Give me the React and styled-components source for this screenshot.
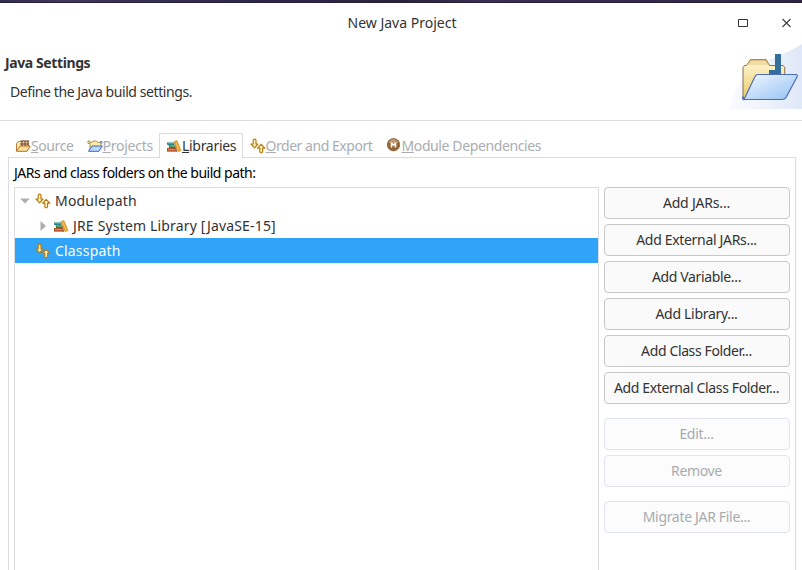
import React from 'react';
import styled, { createGlobalStyle } from 'styled-components';

const Global = createGlobalStyle`
  *{box-sizing:border-box}
  body{margin:0;background:#fff;overflow:hidden;font:14px/20px "Noto Sans",sans-serif;color:#333}
`;
const Window = styled.div`height:570px;width:802px;display:flex;flex-direction:column;overflow:hidden;background:#fff;`;
const Wallpaper = styled.div`height:3px;flex:none;border-bottom:1px solid #262039;background:linear-gradient(90deg,#352c51,#40365f 8%,#30284a 30%,#29233d 50%,#3a2e52 60%,#32284a 88%,#2d2442);`;
const TitleBar = styled.header`height:40px;flex:none;display:grid;grid-template-columns:1fr auto 1fr;align-items:center;padding:0 10px 0 12px;`;
const Controls = styled.div`grid-column:3;display:flex;justify-content:flex-end;gap:32px;`;
const Label = styled.span`white-space:nowrap;font-size:14px;letter-spacing:${p => p.$ls || 0}px;font-weight:${p => p.$bold ? 700 : 400};`;
const Banner = styled.section`height:78px;flex:none;display:flex;justify-content:space-between;border-bottom:1px solid #dcdcdc;`;
const BannerText = styled.div`display:flex;flex-direction:column;padding:10px 0 0 5px;gap:9px;`;
const Indent = styled.div`padding-left:5px;`;
const Tabs = styled.nav`display:flex;height:25px;flex:none;margin:12px 6px -1px 8px;z-index:1;`;
const Tab = styled.div`
  display:flex;align-items:flex-start;width:${p => p.$w}px;height:25px;padding:${p => p.$active ? 2 : 3}px 0 0 ${p => p.$active ? 6 : 7}px;
  color:${p => p.$active ? '#333' : '#aaadb2'};
  ${p => p.$active && 'background:#fff;border:1px solid #d9dbe0;border-bottom:0;'}
  svg{flex:none;margin-top:2px}
`;
const Mnemonic = styled.span`text-decoration:underline;text-underline-offset:1px;text-decoration-thickness:1px;text-decoration-skip-ink:none;`;
const Panel = styled.main`flex:1;min-height:0;margin:0 6px 0 8px;border:1px solid #d9dbe0;border-bottom:0;padding:5px 5px 0;display:flex;flex-direction:column;`;
const Caption = styled.div`height:24px;flex:none;color:#000;`;
const Body = styled.div`display:flex;gap:5px;flex:1;min-height:0;`;
const Tree = styled.div`width:585px;border:1px solid #dcdcdf;border-bottom:0;`;
const Row = styled.div`height:25px;display:flex;align-items:center;padding-left:${p => p.$pad}px;gap:4px;background:${p => p.$selected ? '#2fa4f8' : '#fff'};color:${p => p.$selected ? '#fff' : '#333'};svg{flex:none}`;
const ArrowIcon = styled.svg`margin-right:1px;`;
const Buttons = styled.div`display:flex;flex-direction:column;gap:5px;width:186px;`;
const Group = styled.div`display:flex;flex-direction:column;gap:5px;margin-bottom:9px;`;
const Button = styled.button`height:32px;width:186px;padding:0 1px 0 0;border:1px solid #c8c8c8;border-radius:4px;background:#fafafa;color:#333;font:14px/20px "Noto Sans",sans-serif;
  &:disabled{border-color:#e1e4ee;background:#fcfcfc;color:#a8abaf}`;

const PathIcon = ({ selected }) => (
  <svg width="16" height="16" viewBox="0 -1 16 16" fill={selected ? '#fff3b6' : '#fff3bf'} stroke="#b97b10" strokeWidth="1.2" strokeLinejoin="round">
    <path d="M3.2 1.5 Q3.2.2 4.6.2 Q6 .2 6 1.5V5H8L4.6 8.8 1 5H3.2Z" />
    <path d="M9.8 12.6V9.2H7.6L11.2 5.3 14.9 9.2H12.6V12.6Q12.6 13.8 11.2 13.8 9.8 13.8 9.8 12.6Z" />
  </svg>
);
const BooksIcon = () => (
  <svg width="16" height="16" viewBox="0 0 16 16">
    <path d="M1 4.5H8.5V7.5H2.5L1 6.5Z" fill="#24877f" /><path d="M2 5H8V6H2Z" fill="#3fa9ad" />
    <path d="M3 7.5H9.5V10H3Z" fill="#34784a" /><path d="M4 8H9.5V9H4Z" fill="#63a06a" />
    <path d="M1 10H10.5V13.7H1Z" fill="#b45530" /><path d="M2 11H10V12.2H2Z" fill="#dc8452" />
    <path d="M8.6 6L11 13.7H10Z" fill="#7a4a30" />
    <path d="M8 3.4L11 2.5 15 12.6 12 13.7Z" fill="#e9a129" stroke="#c67e18" strokeWidth=".5" />
    <path d="M9.8 3.8L13 12.5" stroke="#ffc760" />
  </svg>
);
const FolderIcon = ({ source }) => (
  <svg width="16" height="16" viewBox="0 0 16 16" strokeLinejoin="round">
    <path d={source ? 'M1.5 13V5.5L3.5 3.5H13.5V8' : 'M3 13V5.5H1V3H3V4.5H5L6 3H9.5L10.5 4.5H14V8'} fill="#ffe9a7" stroke={source ? '#b77b37' : '#aa9656'} />
    {!source && <path d="M13 3H15.5V5.5H13Z" fill="#8998ae" />}
    {source && <g><path d="M5.5 2.5H14V8H5.5Z" fill="#f3d5ae" /><path d="M5.5 3H14M5 6H14M7 2.5V8M10 2.5V8M13 2.5V8" stroke="#70452d" strokeWidth="1.1" /></g>}
    <path d="M1.5 13.3L5 8H15.3L12 13.3Z" fill={source ? '#ffe09b' : '#b9dafe'} stroke={source ? '#b76e22' : '#4267bb'} />
  </svg>
);
const ModuleIcon = () => (
  <svg width="15" height="16" viewBox="0 0 15 16">
    <circle cx="6.5" cy="6.7" r="6.2" fill="#966332" stroke="#79502b" strokeWidth=".7" />
    <path d="M1.5 5Q3 1 6.5 1T11.5 5Z" fill="#bf956d" />
    <path d="M4.5 9.5V4.5M8.5 9.5V4.5M4.5 5L6.5 7L8.5 5" fill="none" stroke="#fff" strokeWidth="1.6" />
  </svg>
);
const Arrow = ({ open }) => (
  <ArrowIcon width="10" height="10" viewBox="0 0 10 10"><path d={open ? 'M.2 2.5H9.8L5 7.5Z' : 'M2.5 0V10L8 5Z'} fill="#acaeb2" /></ArrowIcon>
);
const BannerIcon = () => (
  <svg width="75" height="66" viewBox="0 0 75 66">
    <defs>
      <linearGradient id="sky" x1="0" y1="0" x2="1" y2="0"><stop stopColor="#f8faff" /><stop offset=".5" stopColor="#eef3fc" /><stop offset="1" stopColor="#dfe8f8" /></linearGradient>
      <linearGradient id="yellow" x1="0" y1="0" x2="0" y2="1"><stop stopColor="#fff8d8" /><stop offset="1" stopColor="#e9cb65" /></linearGradient>
      <linearGradient id="blue" x1="0" y1="0" x2="1" y2="1"><stop stopColor="#f3f9ff" /><stop offset="1" stopColor="#94c0f4" /></linearGradient>
    </defs>
    <path d="M4 66C5 50 10 39 21 30C36 16 58 12 75 1V66Z" fill="url(#sky)" />
    <path d="M16 56V24.5L17.5 22.5H19.5L23.5 16.5H39L42.5 22.5H56L57.7 24V36" fill="url(#yellow)" stroke="#8f704a" />
    <path d="M20 22L24 17H38.5L42 22" fill="#efdda5" stroke="#c5a55d" />
    <path d="M48 11H54V31H42V27H48Z" fill="#336f9c" />
    <path d="M17 56.5L28 33.5Q29 31.5 31 31.5H69Q71 31.5 70 34L59 54.5Q58 56.5 55 56.5H17Q15 56.5 16 54Z" fill="url(#blue)" stroke="#506cb5" strokeWidth="1.2" />
  </svg>
);

const tabs = [
  { w: 71.5, icon: <FolderIcon source />, text: 'Source', ls: -0.4 },
  { w: 79.5, icon: <FolderIcon />, text: 'Projects', ls: -0.25 },
  { w: 83.5, icon: <BooksIcon />, text: 'Libraries', ls: -0.3, active: true },
  { w: 137, icon: <PathIcon />, text: 'Order and Export', ls: -0.46 },
  { w: 170, icon: <ModuleIcon />, text: 'Module Dependencies', ls: -0.39 },
];
const groups = [
  [['Add JARs...', -0.2], ['Add External JARs...', -0.32], ['Add Variable...', -0.35], ['Add Library...', -0.3], ['Add Class Folder...', -0.37], ['Add External Class Folder...', -0.37]],
  [['Edit...', -0.3], ['Remove', -0.35]],
  [['Migrate JAR File...', -0.32]],
];

export default function App() {
  return (
    <Window>
      <Global />
      <Wallpaper />
      <TitleBar>
        <span />
        <Label>New Java Project</Label>
        <Controls>
          <svg width="12" height="12" viewBox="0 0 12 12"><path d="M2.5 2.5H11.5V9.5H2.5Z" fill="none" stroke="#333" /></svg>
          <svg width="12" height="12" viewBox="0 0 12 12"><path d="M2.5 2L10.5 10M10.5 2L2.5 10" stroke="#444" strokeWidth="1.2" /></svg>
        </Controls>
      </TitleBar>
      <Banner>
        <BannerText>
          <Label $bold $ls={-0.4}>Java Settings</Label>
          <Indent><Label $ls={-0.42}>Define the Java build settings.</Label></Indent>
        </BannerText>
        <BannerIcon />
      </Banner>
      <Tabs>
        {tabs.map(t => (
          <Tab key={t.text} $w={t.w} $active={t.active}>
            {t.icon}
            <Label $ls={t.ls}><Mnemonic>{t.text[0]}</Mnemonic>{t.text.slice(1)}</Label>
          </Tab>
        ))}
      </Tabs>
      <Panel>
        <Caption><Label $ls={-0.5}>JARs and class folders on the build path:</Label></Caption>
        <Body>
          <Tree>
            <Row $pad={5}><Arrow open /><PathIcon /><Label $ls={0.18}>Modulepath</Label></Row>
            <Row $pad={23}><Arrow /><BooksIcon /><Label $ls={0.17}>JRE System Library [JavaSE-15]</Label></Row>
            <Row $pad={20} $selected><PathIcon selected /><Label $ls={0.18}>Classpath</Label></Row>
          </Tree>
          <Buttons>
            {groups.map((g, i) => (
              <Group key={i}>
                {g.map(([text, ls]) => <Button key={text} disabled={i > 0}><Label $ls={ls}>{text}</Label></Button>)}
              </Group>
            ))}
          </Buttons>
        </Body>
      </Panel>
    </Window>
  );
}
